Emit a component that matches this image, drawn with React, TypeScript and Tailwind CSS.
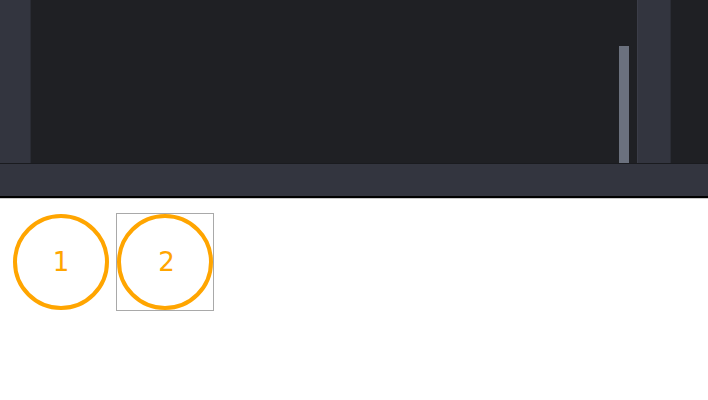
export default function App() {
  return (
    <div className="w-[708px] h-[400px] bg-white font-['DejaVu_Sans',sans-serif]">
      {/* Editor frame */}
      <div className="flex flex-col border-b-2 border-black">
        <div className="flex h-[163px]">
          <div className="w-[31px] bg-[#33353f] border-r border-[#2a2c34]" />
          <div className="flex-1 bg-[#1f2024] flex justify-end items-end pr-[8px]">
            <div className="w-[10px] h-[117px] bg-[#6b717e]" />
          </div>
          <div className="w-[34px] bg-[#33353f] border-l border-[#3b3d48] border-r border-r-[#2b2d35]" />
          <div className="w-[37px] bg-[#1f2024]" />
        </div>
        <div className="h-[33px] bg-[#33353f] border-t border-[#1a1b1f]" />
      </div>
      <div className="h-px bg-[#c8c8c8]" />

      {/* Steps */}
      <div className="flex items-center gap-[7px] pl-[13px] pt-[14px]">
        <div className="w-[96px] h-[96px] rounded-full border-[4px] border-[#ffa500] flex items-center justify-center text-[26px] text-[#ffa500]">
          1
        </div>
        <div className="w-[98px] h-[98px] border border-[#a9a9a9] flex items-center justify-center">
          <div className="w-[96px] h-[96px] rounded-full border-[4px] border-[#ffa500] flex items-center justify-center text-[26px] text-[#ffa500]">
            <span className="pl-[3px]">2</span>
          </div>
        </div>
      </div>
    </div>
  )
}
